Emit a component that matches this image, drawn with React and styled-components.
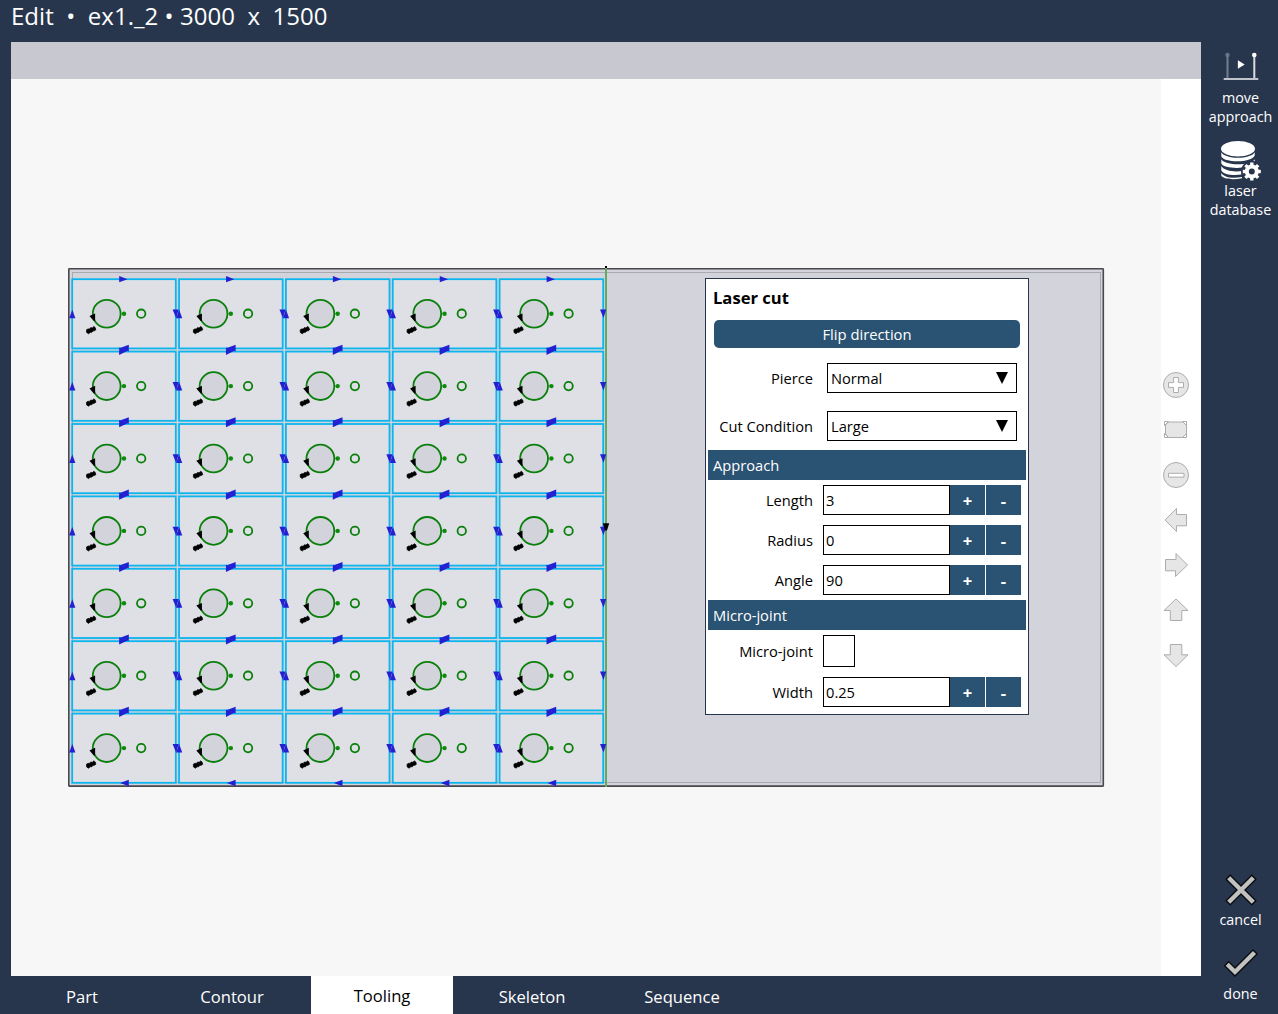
import React from "react";
import styled, { createGlobalStyle } from "styled-components";

const NAVY = "#27364d";
const BLUE = "#2a5272";

const GlobalStyle = createGlobalStyle`
  * { box-sizing: border-box; }
  body { margin: 0; background: ${NAVY}; font-family: "Open Sans", sans-serif; }
  button, input { font-family: inherit; margin: 0; padding: 0; }
`;

const Screen = styled.div`
  width: 1278px;
  height: 1014px;
  display: flex;
  flex-direction: column;
  background: ${NAVY};
  overflow: hidden;
`;

const Title = styled.h1`
  height: 42px;
  margin: 0;
  padding: 0 0 0 11px;
  color: #fff;
  font-size: 24px;
  font-weight: 400;
  line-height: 31px;
  letter-spacing: 0.03px;
  white-space: pre;
`;

const Body = styled.div`
  flex: 1;
  display: flex;
  padding-left: 11px;
`;

const Main = styled.main`
  width: 1190px;
  display: flex;
  flex-direction: column;
`;

const TopStrip = styled.div`
  height: 37px;
  background: #c8c8d1;
`;

const Workspace = styled.div`
  height: 897px;
  display: flex;
`;

const Canvas = styled.section`
  position: relative;
  width: 1150px;
  background: #f7f7f7;
`;

const Drawing = styled.svg`
  display: block;
`;

const ViewTools = styled.div`
  width: 40px;
  padding: 291px 0 0 0;
  background: #fff;
  display: flex;
  flex-direction: column;
  align-items: flex-start;
  gap: 15px;
`;

const ViewButton = styled.button`
  width: 30px;
  height: 30px;
  border: 0;
  background: none;
  svg { display: block; }
`;

const Tabs = styled.nav`
  height: 38px;
  display: flex;
  gap: 8px;
`;

const Tab = styled.button`
  width: 142px;
  border: 0;
  background: ${(p) => (p.$active ? "#fff" : "transparent")};
  color: ${(p) => (p.$active ? "#000" : "#fff")};
  font-size: 16.6px;
  line-height: 22px;
  padding-top: ${(p) => (p.$active ? 1 : 3)}px;
`;

const Sidebar = styled.aside`
  width: 77px;
  display: flex;
  flex-direction: column;
  justify-content: space-between;
  padding: 6px 0 11px 1px;
`;

const ActionGroup = styled.div`
  display: flex;
  flex-direction: column;
  gap: ${(p) => p.$gap}px;
`;

const Action = styled.button`
  display: flex;
  flex-direction: column;
  align-items: center;
  border: 0;
  background: none;
  color: #fff;
  font-size: 14.35px;
  line-height: 19px;
  width: 77px;
  svg { display: block; overflow: visible; }
`;

const Panel = styled.form`
  position: absolute;
  left: 694px;
  top: 199px;
  width: 324px;
  height: 437px;
  border: 1px solid ${NAVY};
  background: #fff;
  padding: 0 2px;
  font-size: 14.67px;
  color: #000;
`;

const PanelTitle = styled.h2`
  margin: 0;
  padding: 9px 5px 0;
  height: 41px;
  font-size: 16.6px;
  line-height: 20px;
  font-weight: 700;
`;

const FlipButton = styled.button`
  display: block;
  width: 306px;
  height: 28px;
  margin-left: 6px;
  border: 0;
  border-radius: 5px;
  background: ${BLUE};
  color: #fff;
  font-size: 14.8px;
`;

const Choices = styled.div`
  display: flex;
  flex-direction: column;
  gap: 18px;
  padding: 15px 0 9px;
`;

const Fields = styled.div`
  display: flex;
  flex-direction: column;
  gap: 10px;
  padding: 5px 0;
`;

const Row = styled.div`
  display: flex;
  align-items: center;
  height: ${(p) => p.$height || 30}px;
`;

const Label = styled.label`
  width: 105px;
  margin-right: ${(p) => p.$gap || 10}px;
  text-align: right;
  white-space: nowrap;
  line-height: 20px;
`;

const Select = styled.div`
  width: 190px;
  height: 30px;
  border: 1px solid #000;
  display: flex;
  align-items: center;
  justify-content: space-between;
  padding: 0 8px 0 3px;
  line-height: 20px;
`;

const SectionBar = styled.div`
  height: 30px;
  line-height: 30px;
  padding-left: 5px;
  background: ${BLUE};
  color: #fff;
`;

const Input = styled.input`
  width: 127px;
  height: 30px;
  border: 1px solid #000;
  border-radius: 0;
  padding-left: 2px;
  font-size: 14.67px;
  outline: none;
`;

const Step = styled.button`
  width: 35px;
  height: 30px;
  margin-right: 1px;
  border: 0;
  background: ${BLUE};
  color: #fff;
  font-size: 16.6px;
  font-weight: 700;
`;

const Checkbox = styled.span`
  width: 32px;
  height: 32px;
  border: 1px solid #000;
`;

function Choice({ label, value }) {
  return (
    <Row>
      <Label $gap={14}>{label}</Label>
      <Select>
        <span>{value}</span>
        <svg width="12" height="12" viewBox="0 0 12 12"><path d="M0 0H12L6 12Z" /></svg>
      </Select>
    </Row>
  );
}

function NumberField({ label, value }) {
  return (
    <Row>
      <Label>{label}</Label>
      <Input defaultValue={value} />
      <Step type="button">+</Step>
      <Step type="button">-</Step>
    </Row>
  );
}

const COLS = [0, 1, 2, 3, 4];
const ROWS = [0, 1, 2, 3, 4, 5, 6];
const PITCH_X = 106.85;
const PITCH_Y = 72.4;

function Part({ col, row }) {
  return (
    <g transform={`translate(${72.2 + col * PITCH_X} ${279.2 + row * PITCH_Y})`}>
      <rect width="103.6" height="69.2" fill="#dfe0e5" stroke="#0db5ee" strokeWidth="1.8" />
      <circle cx="34.5" cy="34.5" r="13.9" fill="#d3d3dc" stroke="#0b7f0b" strokeWidth="1.8" />
      <path d="M49 34.5H52" stroke="#0b7f0b" strokeWidth=".6" />
      <circle cx="51.8" cy="34.5" r="2.2" fill="#0b8a0b" />
      <circle cx="69" cy="34.5" r="4.2" fill="#dfe0e5" stroke="#0b7f0b" strokeWidth="1.8" />
      <path d="M17.3 36.8L22.9 34.2V41.8H21.6Z" fill="#000" />
      <path d="M14.3 50.6l1.6-.9 1.5.1 1.1-1.4 1.6.3 1.5-1.4 1.3.9.8 2.4-1.5 1-1.500 .2-1 1.300-1.700 .1-1.600 1.400-2-1.300Z" fill="#000" stroke="#000" strokeWidth=".7" />
    </g>
  );
}

function Directions({ col, row }) {
  const x = 72.2 + col * PITCH_X;
  const y = 279.2 + row * PITCH_Y;
  return (
    <g fill="#2320d2">
      {row === 0 && <path d={`M${x + 47} ${y - 3.1}l8.3 3.1l-8.3 3.1Z`} />}
      {row > 0 && <path d={`M${x + 46.9} ${y - 4}l9 3l-9 4.300Z`} />}
      <path d={`M${x - 3} ${y + 39}l3.100-8.500l3.100 8.500Z`} />
      <path d={`M${x + 100.4} ${y + 30.3}h6.200l-2.700 8.500Z`} />
      <path d={`M${x + 56.6} ${y + (row < 6 ? 65.6 : 66.1)}v6.600l-8.700-3.300Z`} />
    </g>
  );
}

function SheetDrawing() {
  const cells = ROWS.flatMap((row) => COLS.map((col) => ({ row, col })));
  return (
    <Drawing width="1150" height="897" viewBox="11 79 1150 897">
      <rect x="68.8" y="268.8" width="1034.5" height="517.3" rx=".6" fill="#d3d3dc" stroke="#48484d" strokeWidth="1.6" />
      <rect x="72.5" y="272.5" width="1028" height="510" fill="none" stroke="#a9a9b1" />
      {cells.map((c) => <Part key={`${c.row}-${c.col}`} {...c} />)}
      <rect x="605" y="267" width="2" height="520" fill="#63a863" />
      {cells.map((c) => <Directions key={`${c.row}-${c.col}`} {...c} />)}
      <path d="M605 268h2v-2h-2Z" fill="#000" />
      <path d="M602.8 523.2h6.400l-2.200 7.300h-2Z" fill="#000" />
    </Drawing>
  );
}

const VIEW_ICONS = [
  <g key="in"><circle cx="15" cy="15" r="12.5" /><path fill="#fff" d="M12.6 7.5h4.8v5.1h5.1v4.8h-5.1v5.1h-4.8v-5.1H7.5v-4.8h5.1Z" /></g>,
  <g key="fit"><path d="M7.500 7H22L25.500 10V19L22 22.500H7.500L4.500 19V10Z" /><path fill="#fff" d="M3.500 10.500V6.500H7.500ZM25.500 10.500V6.500H21.500ZM3.500 18.500V22.500H7.500ZM25.500 18.500V22.500H21.500Z" /></g>,
  <g key="out"><circle cx="15" cy="15" r="12.5" /><path fill="#fff" d="M7.500 13.300h15.500v3.800h-15.500Z" /></g>,
  <path key="l" d="M4 15L15.500 3.500V9.500H25.500V20.800H15.500V26.500Z" />,
  <path key="r" d="M26.500 15L15 3.500V9.500H4.500V20.800H14.500V26.500Z" />,
  <path key="u" d="M15 4L27 15.500H20.800V25.500H9.300V15.500H3Z" />,
  <path key="d" d="M15 26.500L27 14.800H20.800V4.500H9.300V14.800H3Z" />,
];

function MoveIcon() {
  return (
    <svg width="40" height="40" viewBox="0 0 40 40">
      <path d="M6.500 8V31" stroke="#747e8e" strokeWidth="2" />
      <circle cx="6.500" cy="7" r="2.200" fill="#6b7587" />
      <path d="M33.300 8V31" stroke="#d9dce1" strokeWidth="2" />
      <circle cx="33.300" cy="7" r="2.300" fill="#fff" />
      <path d="M2.700 31.100H37.300" stroke="#bfc3cb" strokeWidth="2" />
      <path d="M16.900 12.300L23.700 16.500L16.900 20.700Z" fill="#fff" />
    </svg>
  );
}

function DatabaseIcon() {
  const teeth = [0, 45, 90, 135, 180, 225, 270, 315];
  return (
    <svg width="42" height="41" viewBox="0 0 42 41">
      <g fill="#fff">
        <ellipse cx="18" cy="8.700" rx="17" ry="7.700" />
        <path d="M1.300 12.200C5 19.500 31 19.500 34.700 12.200V15.500C32 23 4 23 1.300 16.500Z" />
        <path d="M1.300 19.300C5 26 31 26 34.700 19.300V22.500C31 29.500 4 29.500 1.300 23.500Z" />
        <path d="M1.300 26C5 32.500 22 33 29 28.500V32C21 36.500 4 36 1.300 30.500Z" />
        <path d="M1.300 33C5 38 13 38.500 22 37V38.200C12 40.500 2.500 38.500 1.300 35.500Z" />
      </g>
      <circle cx="31.800" cy="31.500" r="10.800" fill={NAVY} />
      <circle cx="31.800" cy="31.500" r="5" fill="none" stroke="#fff" strokeWidth="4" />
      {teeth.map((a) => <rect key={a} x="30.100" y="22.500" width="3.400" height="3.500" fill="#fff" transform={`rotate(${a} 31.800 31.500)`} />)}
    </svg>
  );
}

function MarkIcon({ outline, fill, height }) {
  return (
    <svg width="36" height={height} viewBox={`0 0 36 ${height}`} fill="none">
      <path d={outline} stroke="#080a0e" strokeWidth="7" />
      <path d={fill} stroke="#c2c2c0" strokeWidth="4.400" />
    </svg>
  );
}

export default function App() {
  return (
    <>
      <GlobalStyle />
      <Screen>
        <Title>{"Edit  •  ex1._2 • 3000  x  1500"}</Title>
        <Body>
          <Main>
            <TopStrip />
            <Workspace>
              <Canvas>
                <SheetDrawing />
                <Panel>
                  <PanelTitle>Laser cut</PanelTitle>
                  <FlipButton type="button">Flip direction</FlipButton>
                  <Choices>
                    <Choice label="Pierce" value="Normal" />
                    <Choice label="Cut Condition" value="Large" />
                  </Choices>
                  <SectionBar>Approach</SectionBar>
                  <Fields>
                    <NumberField label="Length" value="3" />
                    <NumberField label="Radius" value="0" />
                    <NumberField label="Angle" value="90" />
                  </Fields>
                  <SectionBar>Micro-joint</SectionBar>
                  <Fields>
                    <Row $height={32}><Label>Micro-joint</Label><Checkbox /></Row>
                    <NumberField label="Width" value="0.25" />
                  </Fields>
                </Panel>
              </Canvas>
              <ViewTools>
                {VIEW_ICONS.map((icon) => (
                  <ViewButton key={icon.key}>
                    <svg width="30" height="30" fill="#e6e6e6" stroke="#acacac">{icon}</svg>
                  </ViewButton>
                ))}
              </ViewTools>
            </Workspace>
            <Tabs>
              {["Part", "Contour", "Tooling", "Skeleton", "Sequence"].map((t) => (
                <Tab key={t} $active={t === "Tooling"}>{t}</Tab>
              ))}
            </Tabs>
          </Main>
          <Sidebar>
            <ActionGroup $gap={14}>
              <Action><MoveIcon /><span>move<br />approach</span></Action>
              <Action><DatabaseIcon /><span>laser<br />database</span></Action>
            </ActionGroup>
            <ActionGroup $gap={21}>
              <Action>
                <MarkIcon
                  height={36}
                  outline="M4.700 2.700L31.300 29.300M31.300 2.700L4.700 29.300"
                  fill="M5.700 3.700L30.300 28.300M30.300 3.700L5.700 28.300"
                />
                <span>cancel</span>
              </Action>
              <Action>
                <MarkIcon
                  height={34}
                  outline="M3.200 13.200L12 22L32.500 1.500"
                  fill="M4.200 14.200L12 22L31.500 2.500"
                />
                <span>done</span>
              </Action>
            </ActionGroup>
          </Sidebar>
        </Body>
      </Screen>
    </>
  );
}
